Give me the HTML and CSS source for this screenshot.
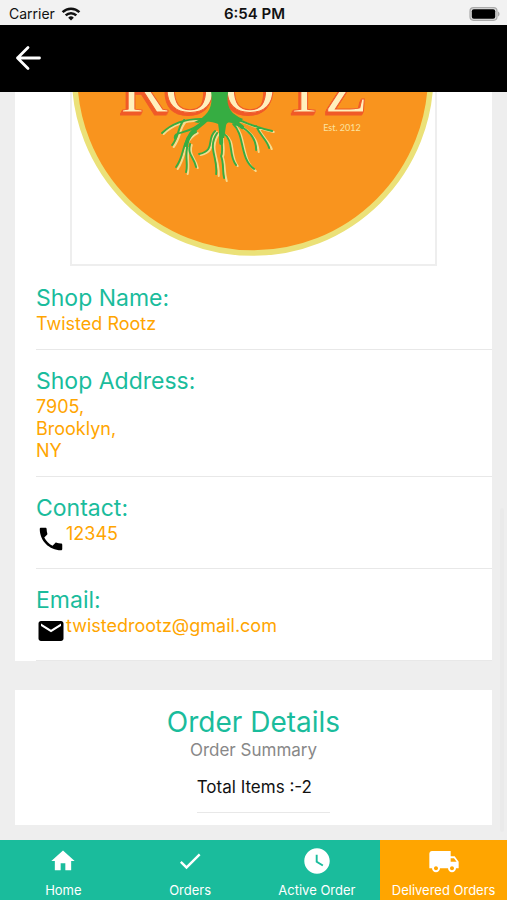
FILE: index.html
```html
<!DOCTYPE html>
<html lang="en">
<head>
<meta charset="utf-8">
<meta name="viewport" content="width=device-width, initial-scale=1">
<title>Order</title>
<link rel="stylesheet" href="styles.css">
</head>
<body>
<div class="app">
  <div class="status">
    <div class="status-left">
      <span>Carrier</span>
      <svg width="20" height="14" viewBox="0 0 20 14" fill="none" stroke="#111" stroke-width="2.5" aria-hidden="true">
        <path d="M1.600 5.200a12 12 0 0 1 16.800 0M4.700 8.400a7.500 7.500 0 0 1 10.600 0"/>
        <path d="M10 13.500 7.200 10.700a4 4 0 0 1 5.600 0z" fill="#111" stroke="none"/>
      </svg>
    </div>
    <strong class="clock">6:54 PM</strong>
    <svg class="battery" width="31" height="14" viewBox="0 0 31 14" aria-hidden="true">
      <rect x="1" y=".7" width="27" height="12.600" rx="3.500" fill="#ddd" stroke="#aaa" stroke-width="1.200"/>
      <rect x="2.800" y="2.300" width="23.400" height="9.400" rx="2" fill="#000"/>
      <path d="M29 4.500c2 .8 2 4.200 0 5z" fill="#aaa"/>
    </svg>
  </div>
  <header class="header">
    <button class="back" type="button" aria-label="Back">
      <svg width="28" height="28" viewBox="0 0 28 28" fill="none" stroke="#fff" stroke-width="2.800" stroke-linecap="round" stroke-linejoin="round" aria-hidden="true"><path d="M14 3.500 3.500 14 14 24.500M3.500 14H25.500"/></svg>
    </button>
  </header>

  <main class="content">
    <section class="card">
      <div class="frame">
        <svg viewBox="73 92 363 172" role="img" aria-label="Twisted Rootz logo">
          <circle cx="253.500" cy="75" r="178" fill="#f9941e" stroke="#ebe178" stroke-width="5.500"/>
          <text class="logo-name" x="121 165 225 283 325" y="112">ROOTZ</text>
          <g fill="none" stroke="#f4dc91" stroke-width="2" stroke-linecap="round" transform="translate(1.600 1)">
            <path d="M204 120C190 119 174 122 163 133M185 121C178 128 181 135 173 146M197 132C181 141 187 153 177 168M188 147C186 157 189 165 187 173M191 144C188 155 195 157 197 167M216 131C207 139 217 150 200 154M218 133C208 148 219 157 218 175M222 127C221 142 225 149 222 156C225 164 223 170 226 180M225 134C235 140 229 156 237 165M234 124C246 135 240 158 255 170M236 124C249 129 257 138 258 151M239 120C251 124 258 128 273 131M257 126C262 137 268 140 271 148"/>
          </g>
          <g fill="none" stroke="#36ad42" stroke-width="1.900" stroke-linecap="round">
            <path d="M208 119C190 118 174 122 163 133M185 120C178 127 181 135 173 145M204 121C190 136 173 130 176 139M197 132C181 141 187 153 177 167M188 147C186 157 189 165 187 172M191 144C188 155 195 157 197 167M216 131C207 139 217 150 200 154M218 133C208 148 219 157 217 174M222 127C221 142 225 149 222 156C225 164 223 170 225 178M225 134C235 140 229 156 237 165M234 124C246 135 240 158 255 169M236 124C249 129 257 138 257 150M239 120C251 124 258 128 273 131M257 126C262 137 268 140 270 148"/>
            <path stroke-width="4" d="M208 119C198 129 190 131 187 145M222 118V143M230 117L243 127"/>
          </g>
          <path fill="#36ad42" d="M212 92H229C227 104 229 113 244 119L238 124C233 124 229 120 227 125L225 138H221L219 124C214 122 206 120 199 123L195 122C210 116 214 106 212 92Z"/>
          <text class="logo-est" x="324" y="131">Est. 2012</text>
        </svg>
      </div>
      <div class="rows">
        <div class="row"><h2>Shop Name:</h2><p>Twisted Rootz</p></div>
        <div class="row"><h2>Shop Address:</h2><p>7905,<br>Brooklyn,<br>NY</p></div>
        <div class="row"><h2>Contact:</h2>
          <div class="line">
            <svg width="30" height="30" viewBox="0 0 24 24" aria-hidden="true"><path d="M6.620 10.790c1.440 2.830 3.760 5.140 6.590 6.590l2.200-2.200c.27-.27.67-.36 1.020-.24 1.120.37 2.330.57 3.570.57.55 0 1 .45 1 1V20c0 .55-.45 1-1 1-9.390 0-17-7.610-17-17 0-.55.45-1 1-1h3.500c.55 0 1 .45 1 1 0 1.250.2 2.450.57 3.570.11.35.03.74-.25 1.020l-2.200 2.200z"/></svg>
            <p>12345</p>
          </div>
        </div>
        <div class="row"><h2>Email:</h2>
          <div class="line">
            <svg width="30" height="30" viewBox="0 0 24 24" aria-hidden="true"><path d="M20 4H4c-1.100 0-1.990.9-1.990 2L2 18c0 1.100.9 2 2 2h16c1.100 0 2-.9 2-2V6c0-1.100-.9-2-2-2zm0 4l-8 5-8-5V6l8 5 8-5v2z"/></svg>
            <p>twistedrootz@gmail.com</p>
          </div>
        </div>
      </div>
    </section>

    <section class="card summary">
      <h1>Order Details</h1>
      <p class="subtitle">Order Summary</p>
      <p class="total">Total Items :-2</p>
    </section>
    <div class="thumb"></div>
  </main>

  <nav class="tabs">
    <a href="#home"><svg width="30" height="28" viewBox="0 0 24 24" aria-hidden="true"><path d="M10 20v-6h4v6h5v-8h3L12 3 2 12h3v8z"/></svg><span>Home</span></a>
    <a href="#orders"><svg width="30" height="28" viewBox="0 0 24 24" aria-hidden="true"><path d="M9 16.170 4.830 12l-1.420 1.410L9 19 21 7l-1.410-1.410z"/></svg><span>Orders</span></a>
    <a href="#active"><svg width="30" height="28" viewBox="1 1 22 22" aria-hidden="true"><path fill-rule="evenodd" d="M12 2C6.500 2 2 6.500 2 12s4.500 10 10 10 10-4.500 10-10S17.500 2 12 2zm4.200 14.200L11 13V7h1.500v5.200l4.500 2.700-.8 1.300z"/></svg><span>Active Order</span></a>
    <a href="#delivered" class="current" aria-current="page"><svg width="30" height="28" viewBox="1 1 22 21" aria-hidden="true"><path d="M20 8h-3V4H3c-1.100 0-2 .9-2 2v11h2c0 1.660 1.340 3 3 3s3-1.340 3-3h6c0 1.660 1.340 3 3 3s3-1.340 3-3h2v-5l-3-4zM6 18.500c-.83 0-1.500-.67-1.500-1.500s.67-1.500 1.500-1.500 1.500.67 1.500 1.500-.67 1.500-1.500 1.500zm13.500-9 1.960 2.500H17V9.500h2.500zm-1.500 9c-.83 0-1.500-.67-1.500-1.500s.67-1.500 1.500-1.500 1.500.67 1.500 1.500-.67 1.500-1.500 1.500z"/></svg><span>Delivered Orders</span></a>
  </nav>
</div>
</body>
</html>
```
FILE: styles.css
```css
* { box-sizing: border-box; }
body {
  margin: 0;
  font-family: Inter, "Liberation Sans", sans-serif;
  color: #111;
  background: #eee;
}
h1, h2, p { margin: 0; font-weight: 400; }
svg { display: block; flex: none; }

.app { display: flex; flex-direction: column; height: 100vh; }

.status {
  display: grid;
  grid-template-columns: 1fr auto 1fr;
  align-items: center;
  height: 25px;
  padding: 2px 7px 0 9px;
  background: #f2f2f2;
  font-size: 14px;
}
.status-left { display: flex; align-items: center; gap: 6px; }
.clock { font-size: 15px; font-weight: 600; }
.battery { justify-self: end; }

.header { display: flex; align-items: center; height: 67px; padding: 0 14px 2px; background: #000; flex: none; }
.back { padding: 0; border: 0; background: none; }

.content {
  position: relative;
  flex: 1;
  min-height: 0;
  overflow: hidden;
  padding: 0 15px;
}
.card { background: #fff; }
.frame { width: 77%; margin: 0 auto; border: 2px solid #eee; border-top: 0; }
.frame svg { width: 100%; height: auto; }
.logo-name {
  font-family: "Liberation Serif", serif;
  font-size: 72px;
  fill: #fff0bd;
  stroke: #f05a28;
  stroke-width: 1px;
  filter: drop-shadow(-1px 2px 0 #f05a28) drop-shadow(-1px 1px 0 #f05a28);
}
.logo-est { font-family: Lato, sans-serif; font-size: 9px; fill: #fbe3a0; }

.rows { padding: 1px 0 0 21px; }
.row { padding: 17px 0 14px; border-bottom: 1px solid #e8e8e8; }
.row h2 { font-size: 23px; line-height: 29px; color: #1abc9c; }
.row p { font-size: 18px; line-height: 22px; color: #ffa500; }
.line { display: flex; align-items: flex-start; height: 31px; }
.line svg { margin-top: 1px; }

.summary { display: flex; flex-direction: column; align-items: center; margin-top: 29px; padding: 15px 0 12px; }
.summary h1 { font-size: 28px; line-height: 34px; color: #1abc9c; }
.subtitle { font-size: 17px; line-height: 22px; color: #888; }
.total { width: 28%; margin: 15px 0 0 20px; padding-bottom: 14px; border-bottom: 1px solid #e8e8e8; font-size: 17px; line-height: 22px; white-space: nowrap; }

.thumb { position: absolute; right: 3px; bottom: 8px; width: 4px; height: 324px; border-radius: 2px; background: #eaeaea; }

.tabs { display: grid; grid-template-columns: repeat(4, 1fr); height: 60px; flex: none; background: #1abc9c; }
.tabs a {
  display: flex;
  flex-direction: column;
  align-items: center;
  gap: 7px;
  padding-top: 7px;
  color: #fff;
  fill: #fff;
  font-size: 13px;
  line-height: 16px;
  text-decoration: none;
  white-space: nowrap;
}
.tabs .current { background: #ffa500; }
```
